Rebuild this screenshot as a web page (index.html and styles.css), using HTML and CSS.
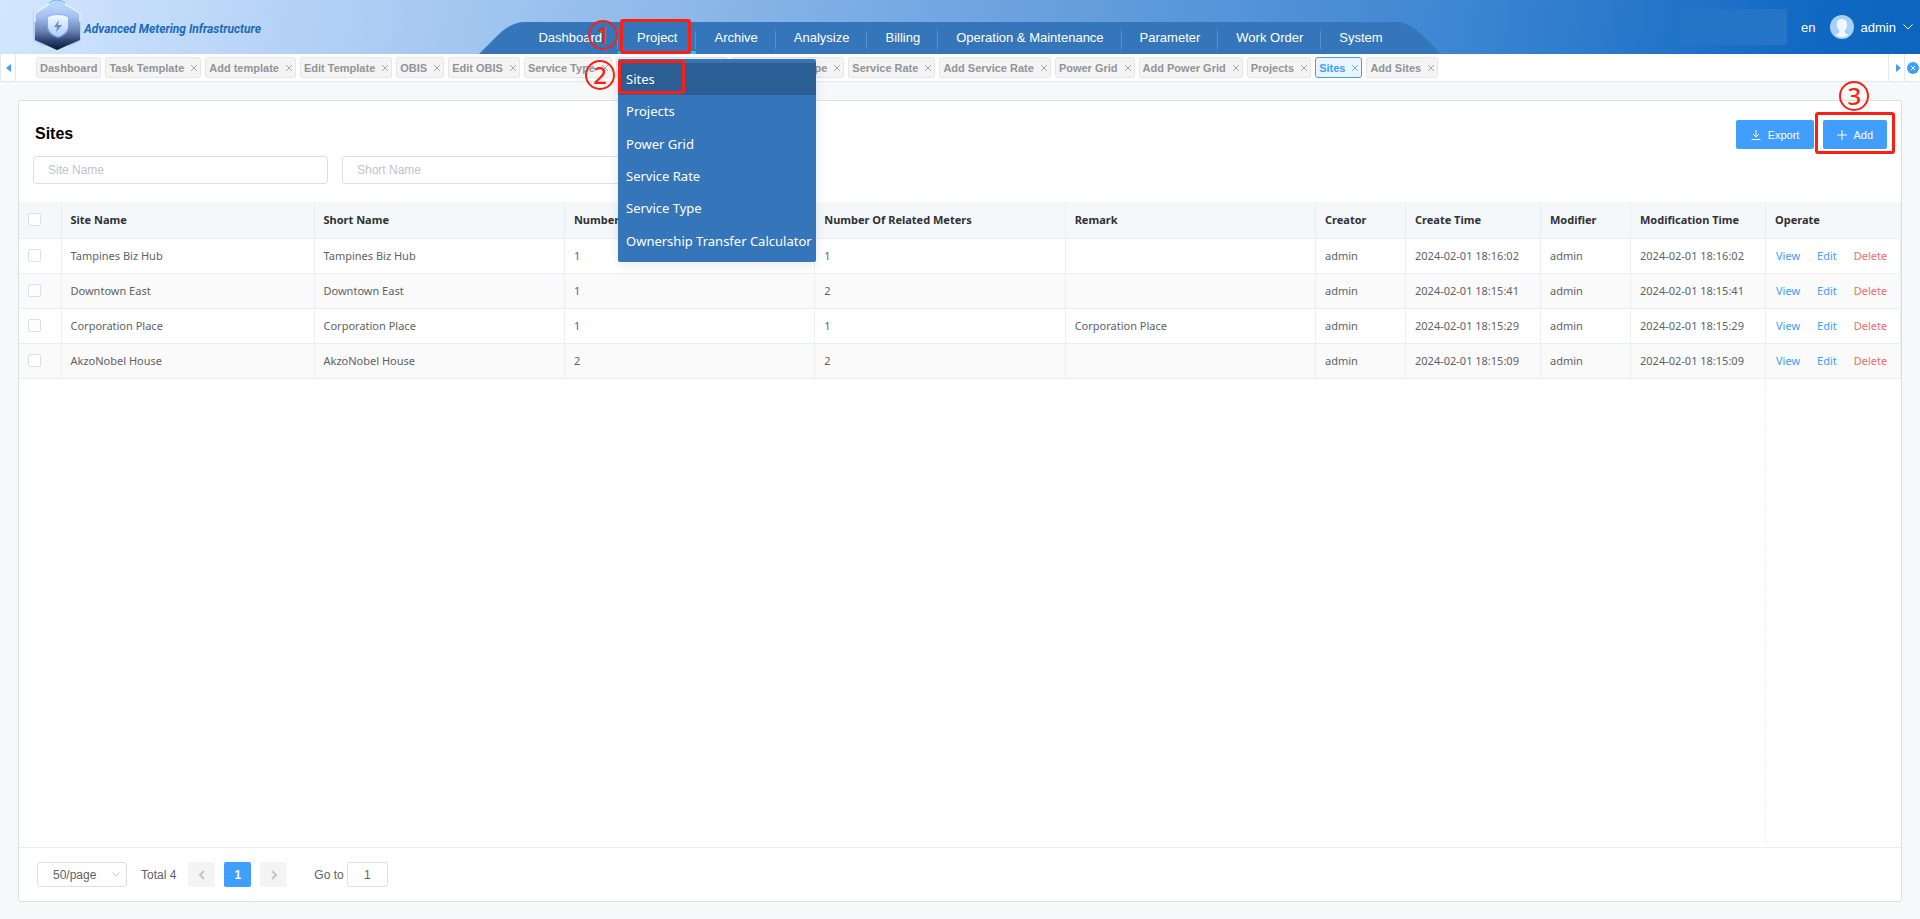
FILE: index.html
```html
<!DOCTYPE html>
<html lang="en">
<head>
  <meta charset="UTF-8">
  <meta name="viewport" content="width=device-width, initial-scale=1.0">
  <title>Advanced Metering Infrastructure</title>
  <link rel="stylesheet" href="styles.css">
</head>
<body>
  <header class="header">
    <a class="brand" href="#">
      <svg class="logo" viewBox="0 0 52 54" aria-hidden="true">
        <defs>
          <linearGradient id="hex" x1="0" y1="0" x2="0" y2="1">
            <stop offset="0" stop-color="#c0daff"/>
            <stop offset=".3" stop-color="#a3bfec"/>
            <stop offset=".6" stop-color="#6a81b0"/>
            <stop offset=".8" stop-color="#304473"/>
            <stop offset="1" stop-color="#081638"/>
          </linearGradient>
          <linearGradient id="shield" x1="0" y1="0" x2="0" y2="1">
            <stop offset="0" stop-color="#f4f9ff"/>
            <stop offset="1" stop-color="#a9cdfb"/>
          </linearGradient>
        </defs>
        <path d="M26 1 50 12v29L26 53 2 41V12z" fill="#8fbcf5" opacity=".4"/>
        <path d="M26 3 49 14v26L26 50 4 40V14z" fill="url(#hex)"/>
        <path d="M4 22V13L18 4M34 4l15 9v9" fill="none" stroke="#e6f1ff" stroke-width="1.5"/>
        <path d="M18 3q8-6 16 0" fill="none" stroke="#5db7ee" stroke-width="1"/>
        <path d="M14 46l12 6 12-6" fill="none" stroke="#d5e7ff" stroke-width="1.5"/>
        <path d="M27 15q5 0 10 2v9c0 5-4 9-10 11-6-2-10-6-10-11v-9q5-2 10-2z" fill="#7fb1ff" stroke="#7fb1ff" stroke-width="3" opacity=".4"/>
        <path d="M27 15q5 0 10 2v9c0 5-4 9-10 11-6-2-10-6-10-11v-9q5-2 10-2z" fill="url(#shield)"/>
        <path d="M28 20l-5 7h3l-1 5 6-7h-4z" fill="#5a8de0"/>
      </svg>
      <span class="brand-name">Advanced Metering Infrastructure</span>
    </a>
    <nav class="nav">
      <a href="#">Dashboard</a>
      <div class="nav-group">
        <a class="current" href="#">Project<span class="mark mark-project"></span></a>
        <span class="step step-one">1</span>
        <div class="menu">
          <a class="active" href="#">Sites<span class="mark mark-sites"></span></a>
          <a href="#">Projects</a>
          <a href="#">Power Grid</a>
          <a href="#">Service Rate</a>
          <a href="#">Service Type</a>
          <a href="#">Ownership Transfer Calculator</a>
          <span class="step step-two">2</span>
        </div>
      </div>
      <a href="#">Archive</a>
      <a href="#">Analysize</a>
      <a href="#">Billing</a>
      <a href="#">Operation &amp; Maintenance</a>
      <a href="#">Parameter</a>
      <a href="#">Work Order</a>
      <a href="#">System</a>
    </nav>
    <div class="user">
      <span class="notice"></span>
      <button class="lang" type="button">en</button>
      <button class="account" type="button">
        <svg class="avatar" viewBox="0 0 24 24" aria-hidden="true">
          <circle cx="12" cy="12" r="12" fill="#a9d0fa"/>
          <path d="M12 4c4 0 5.500 3 5 7-.3 2-1.200 4-2.500 5 0 2 1 2.500 4.500 4a12 12 0 0 1-14 0c3.500-1.500 4.500-2 4.500-4C8.200 15 7.300 13 7 11c-.5-4 1-7 5-7z" fill="#f2f8ff"/>
        </svg>
        admin
        <svg class="caret" viewBox="0 0 10 6" aria-hidden="true"><path d="M.5.5 5 5 9.500.5" fill="none" stroke="#fff"/></svg>
      </button>
    </div>
  </header>

  <div class="tabs">
    <button class="tabs-btn tabs-prev" type="button" aria-label="Scroll left">
      <svg viewBox="0 0 5 8"><path d="M5 0v8L0 4z" fill="#409eff"/></svg>
    </button>
    <div class="tabs-list" id="tabs-list"></div>
    <button class="tabs-btn tabs-next" type="button" aria-label="Scroll right">
      <svg viewBox="0 0 5 8"><path d="M0 0v8l5-4z" fill="#409eff"/></svg>
    </button>
    <button class="tabs-btn tabs-close" type="button" aria-label="Close all">
      <svg viewBox="0 0 12 12"><circle cx="6" cy="6" r="6" fill="#409eff"/><path d="M4 4l4 4M8 4 4 8" stroke="#fff"/></svg>
    </button>
  </div>

  <main class="card">
    <div class="card-head">
      <h1>Sites</h1>
      <div class="actions">
        <button class="btn" type="button">
          <svg viewBox="0 0 10 10"><path d="M5 0v7M2 4l3 3 3-3M.5 9.500h9" fill="none" stroke="#fff"/></svg>
          Export
        </button>
        <div class="add-wrap">
          <button class="btn btn-add" type="button">
            <svg viewBox="0 0 10 10"><path d="M5 0v10M0 5h10" stroke="#fff"/></svg>
            Add
          </button>
          <span class="mark mark-add"></span>
          <span class="step step-three">3</span>
        </div>
      </div>
    </div>

    <form class="filters">
      <input type="text" placeholder="Site Name" aria-label="Site Name">
      <input type="text" placeholder="Short Name" aria-label="Short Name">
    </form>

    <div class="table-area">
      <table>
        <colgroup>
          <col class="col-check"><col class="col-name"><col><col><col><col>
          <col class="col-user"><col class="col-time"><col class="col-user"><col class="col-time"><col class="col-time">
        </colgroup>
        <thead>
          <tr>
            <th><input type="checkbox" aria-label="Select all"></th>
            <th>Site Name</th>
            <th>Short Name</th>
            <th>Number Of Projects</th>
            <th>Number Of Related Meters</th>
            <th>Remark</th>
            <th>Creator</th>
            <th>Create Time</th>
            <th>Modifier</th>
            <th>Modification Time</th>
            <th>Operate</th>
          </tr>
        </thead>
        <tbody id="sites"></tbody>
      </table>
      <div class="table-rest"></div>
    </div>

    <footer class="pager">
      <select aria-label="Page size">
        <option>50/page</option>
      </select>
      <span class="total">Total 4</span>
      <button class="page" type="button" aria-label="Previous page">
        <svg viewBox="0 0 6 10"><path d="M5 1 1 5l4 4" fill="none" stroke="#c0c4cc" stroke-width="2"/></svg>
      </button>
      <button class="page page-current" type="button">1</button>
      <button class="page" type="button" aria-label="Next page">
        <svg viewBox="0 0 6 10"><path d="M1 1l4 4-4 4" fill="none" stroke="#c0c4cc" stroke-width="2"/></svg>
      </button>
      <label class="goto" for="goto">Go to</label>
      <input class="goto-input" id="goto" type="text" value="1">
    </footer>
  </main>

  <script src="script.js"></script>
</body>
</html>
```
FILE: styles.css
```css
* {
  box-sizing: border-box;
}

body {
  margin: 0;
  min-height: 100vh;
  display: flex;
  flex-direction: column;
  background: #f7f8fa;
  font-family: "Liberation Sans", Arial, sans-serif;
  font-size: 12px;
  color: #606266;
}

a {
  color: inherit;
  text-decoration: none;
}

button,
input,
select {
  font: inherit;
  color: inherit;
}

button {
  border: 0;
  padding: 0;
  background: none;
  cursor: pointer;
}

/* header */
.header {
  display: grid;
  grid-template-columns: 1fr auto 1fr;
  height: 54px;
  background: linear-gradient(100deg, #d3e6ff 0%, #9fc4ef 26%, #70a5e0 50%, #3f87d2 75%, #1169c3 94%, #0c64bd 100%);
}

.brand {
  display: flex;
  align-items: center;
  padding-left: 31px;
}

.logo {
  width: 52px;
  height: 54px;
}

.brand-name {
  padding: 4px 0 0 1px;
  font-family: Roboto, sans-serif;
  font-size: 12px;
  font-weight: 700;
  font-style: italic;
  color: #1b6abb;
}

.nav {
  position: relative;
  z-index: 2;
  display: flex;
  align-self: end;
  height: 32px;
  padding: 0 40px 0 41px;
  color: #fff;
  font-size: 13px;
}

.nav::before,
.nav::after {
  content: "";
  position: absolute;
  z-index: -1;
  top: 0;
  bottom: 0;
  width: 60%;
  background: #3576ba;
}

.nav::before {
  left: 0;
  border-top-left-radius: 12px;
  transform: skewX(-45deg);
  transform-origin: left bottom;
}

.nav::after {
  right: 0;
  border-top-right-radius: 12px;
  transform: skewX(45deg);
  transform-origin: right bottom;
}

.nav > a,
.nav-group > a {
  position: relative;
  display: block;
  padding: 0 18px;
  line-height: 32px;
}

.nav > a:first-child {
  padding-right: 16px;
}

.nav > a:not(:last-child)::after,
.nav-group::after {
  content: "";
  position: absolute;
  right: 0;
  top: 9px;
  width: 1px;
  height: 18px;
  background: #5c92cb;
}

.nav-group {
  position: relative;
}

.nav-group > .current {
  padding: 0 19px;
  box-shadow: inset 0 -3px #00d2f7;
}

.menu {
  position: absolute;
  top: 37px;
  left: 0;
  display: grid;
  grid-template-columns: minmax(0, 1fr);
  width: 198px;
  height: 203px;
  padding: 4px 0 5px;
  border-radius: 2px;
  background: #3576ba;
  box-shadow: 0 2px 12px rgba(0, 0, 0, 0.1);
  font-family: "Noto Sans", "Open Sans", sans-serif;
  font-size: 13px;
}

.menu a {
  position: relative;
  display: flex;
  align-items: center;
  padding: 0 8px;
  white-space: nowrap;
}

.menu .active {
  background: #2a5e95;
}

/* numbered callouts */
.mark {
  position: absolute;
  border: 3px solid #fc1f14;
  border-radius: 3px;
}

.mark-project {
  top: -3px;
  left: 2px;
  width: 71px;
  height: 35px;
}

.mark-sites {
  top: -3px;
  left: 0;
  width: 67px;
  height: 34px;
}

.mark-add {
  top: -8px;
  left: -8px;
  right: -8px;
  bottom: -5px;
}

.step {
  position: absolute;
  width: 30px;
  height: 30px;
  border: 2px solid #fc1f14;
  border-radius: 50%;
  font-family: "Noto Sans", sans-serif;
  font-size: 24px;
  font-weight: 500;
  line-height: 26px;
  text-align: center;
  color: #fc1f14;
}

.step-one {
  top: -2px;
  left: -30px;
}

.step-two {
  top: 1px;
  left: -33px;
}

.step-three {
  top: -39px;
  left: 16px;
}

.user {
  display: flex;
  justify-content: flex-end;
  align-items: center;
  gap: 14px;
  padding-right: 7px;
  font-size: 13px;
  color: #fff;
}

.notice {
  width: 107px;
  height: 36px;
  background: #2474c8;
}

.account {
  display: flex;
  align-items: center;
  gap: 7px;
}

.avatar {
  width: 24px;
  height: 24px;
}

.caret {
  width: 10px;
  height: 6px;
}

/* opened pages */
.tabs {
  display: flex;
  height: 28px;
  background: #fff;
  border-bottom: 1px solid #e4e7ed;
}

.tabs-btn {
  display: flex;
  align-items: center;
  justify-content: center;
  width: 16px;
  border-left: 1px solid #e4e7ed;
}

.tabs-btn svg {
  width: 5px;
  height: 8px;
}

.tabs-prev {
  border-right: 1px solid #e4e7ed;
}

.tabs-next {
  padding-left: 3px;
}

.tabs-close svg {
  width: 12px;
  height: 12px;
}

.tabs-list {
  flex: 1;
  display: flex;
  align-items: center;
  gap: 4px;
  padding-left: 20px;
  overflow: hidden;
}

.tab {
  display: flex;
  align-items: center;
  gap: 7px;
  height: 21px;
  padding: 0 3px;
  border: 1px solid #e6e6e6;
  border-radius: 3px;
  background: #f4f4f5;
  font-size: 11px;
  font-weight: 700;
  color: #909399;
  white-space: nowrap;
}

.tab svg {
  width: 6px;
  height: 6px;
}

.tab-active {
  border-color: #409eff;
  background: #ecf5ff;
  color: #409eff;
}

/* content card */
.card {
  flex: 1;
  display: flex;
  flex-direction: column;
  margin: 18px 18px 17px;
  border: 1px solid #dcdfe6;
  border-radius: 3px;
  background: #fff;
}

.card-head {
  display: flex;
  justify-content: space-between;
  height: 55px;
  padding: 19px 14px 0 16px;
}

.card-head h1 {
  margin: 4px 0 0;
  font-size: 16px;
  line-height: 20px;
  color: #000;
}

.actions {
  display: flex;
  align-items: flex-start;
  gap: 9px;
}

.add-wrap {
  position: relative;
}

.btn {
  display: flex;
  align-items: center;
  gap: 7px;
  height: 29px;
  padding: 0 15px;
  border-radius: 2px;
  background: #409eff;
  font-size: 11px;
  color: #fff;
}

.btn-add {
  gap: 6px;
  padding: 0 14px;
}

.btn svg {
  width: 10px;
  height: 10px;
}

.filters {
  display: flex;
  gap: 14px;
  padding: 0 14px 18px;
}

.filters input {
  width: 295px;
  height: 28px;
  padding: 0 14px;
  border: 1px solid #dcdfe6;
  border-radius: 3px;
}

input::placeholder {
  color: #c0c4cc;
}

.table-area {
  flex: 1;
  display: flex;
  flex-direction: column;
}

table {
  width: 100%;
  table-layout: fixed;
  border-collapse: collapse;
  font-family: "Noto Sans", "Open Sans", sans-serif;
  font-size: 11px;
}

.col-check {
  width: 42px;
}

.col-name {
  width: 253px;
}

.col-user {
  width: 90px;
}

.col-time {
  width: 135px;
}

th,
td {
  height: 35px;
  padding: 0 9px;
  border-right: 1px solid #ebeef5;
  border-bottom: 1px solid #ebeef5;
  text-align: left;
  white-space: nowrap;
}

th {
  height: 36px;
  background: #f5f8fb;
  color: #303133;
}

tbody tr:nth-child(even) {
  background: #fafafa;
}

input[type="checkbox"] {
  display: block;
  appearance: none;
  width: 13px;
  height: 13px;
  margin: 0;
  border: 1px solid #dcdfe6;
  border-radius: 2px;
  background: #fff;
}

.ops {
  display: flex;
  gap: 17px;
  padding-left: 1px;
  color: #409eff;
}

.ops .danger {
  color: #f56c6c;
}

.table-rest {
  flex: 1;
  width: 136px;
  margin: 0 0 4px auto;
  border-left: 1px dashed #ebeef5;
}

/* pagination */
.pager {
  display: flex;
  align-items: center;
  height: 54px;
  padding: 0 18px;
  border-top: 1px solid #ebeef5;
}

.pager select {
  width: 90px;
  height: 25px;
  padding: 0 15px;
  border: 1px solid #dcdfe6;
  border-radius: 3px;
  appearance: none;
  background: #fff url("data:image/svg+xml,%3Csvg xmlns='http://www.w3.org/2000/svg' width='8' height='5'%3E%3Cpath d='M.5.5 4 4 7.500.5' fill='none' stroke='%23c0c4cc'/%3E%3C/svg%3E") no-repeat right 6px center;
}

.total {
  margin: 0 12px 0 14px;
}

.page {
  display: flex;
  align-items: center;
  justify-content: center;
  width: 27px;
  height: 25px;
  margin-right: 9px;
  border-radius: 2px;
  background: #f4f4f5;
}

.page svg {
  width: 6px;
  height: 10px;
}

.page-current {
  background: #409eff;
  font-weight: 700;
  color: #fff;
}

.goto {
  margin: 0 3px 0 18px;
}

.goto-input {
  width: 41px;
  height: 25px;
  border: 1px solid #dcdfe6;
  border-radius: 3px;
  text-align: center;
}
```
FILE: script.js
```js
const tabs = [
  "Dashboard", "Task Template", "Add template", "Edit Template", "OBIS", "Edit OBIS",
  "Service Type", "Add Service Type", "Edit Service Type", "Service Rate", "Add Service Rate",
  "Power Grid", "Add Power Grid", "Projects", "Sites", "Add Sites"
];

const sites = [
  { name: "Tampines Biz Hub", projects: 1, meters: 1, remark: "", time: "2024-02-01 18:16:02" },
  { name: "Downtown East", projects: 1, meters: 2, remark: "", time: "2024-02-01 18:15:41" },
  { name: "Corporation Place", projects: 1, meters: 1, remark: "Corporation Place", time: "2024-02-01 18:15:29" },
  { name: "AkzoNobel House", projects: 2, meters: 2, remark: "", time: "2024-02-01 18:15:09" }
];

const closeIcon = '<svg viewBox="0 0 6 6"><path d="M0 0l6 6M6 0 0 6" stroke="currentColor" stroke-width=".8"/></svg>';

document.getElementById("tabs-list").innerHTML = tabs.map((tab, i) => `
  <button type="button" class="tab ${tab === "Sites" ? "tab-active" : ""}">${tab}${i ? closeIcon : ""}</button>
`).join("");

document.getElementById("sites").innerHTML = sites.map(site => `
  <tr>
    <td><input type="checkbox" aria-label="Select ${site.name}"></td>
    <td>${site.name}</td>
    <td>${site.name}</td>
    <td>${site.projects}</td>
    <td>${site.meters}</td>
    <td>${site.remark}</td>
    <td>admin</td>
    <td>${site.time}</td>
    <td>admin</td>
    <td>${site.time}</td>
    <td><div class="ops"><a href="#">View</a><a href="#">Edit</a><a class="danger" href="#">Delete</a></div></td>
  </tr>
`).join("");
```
